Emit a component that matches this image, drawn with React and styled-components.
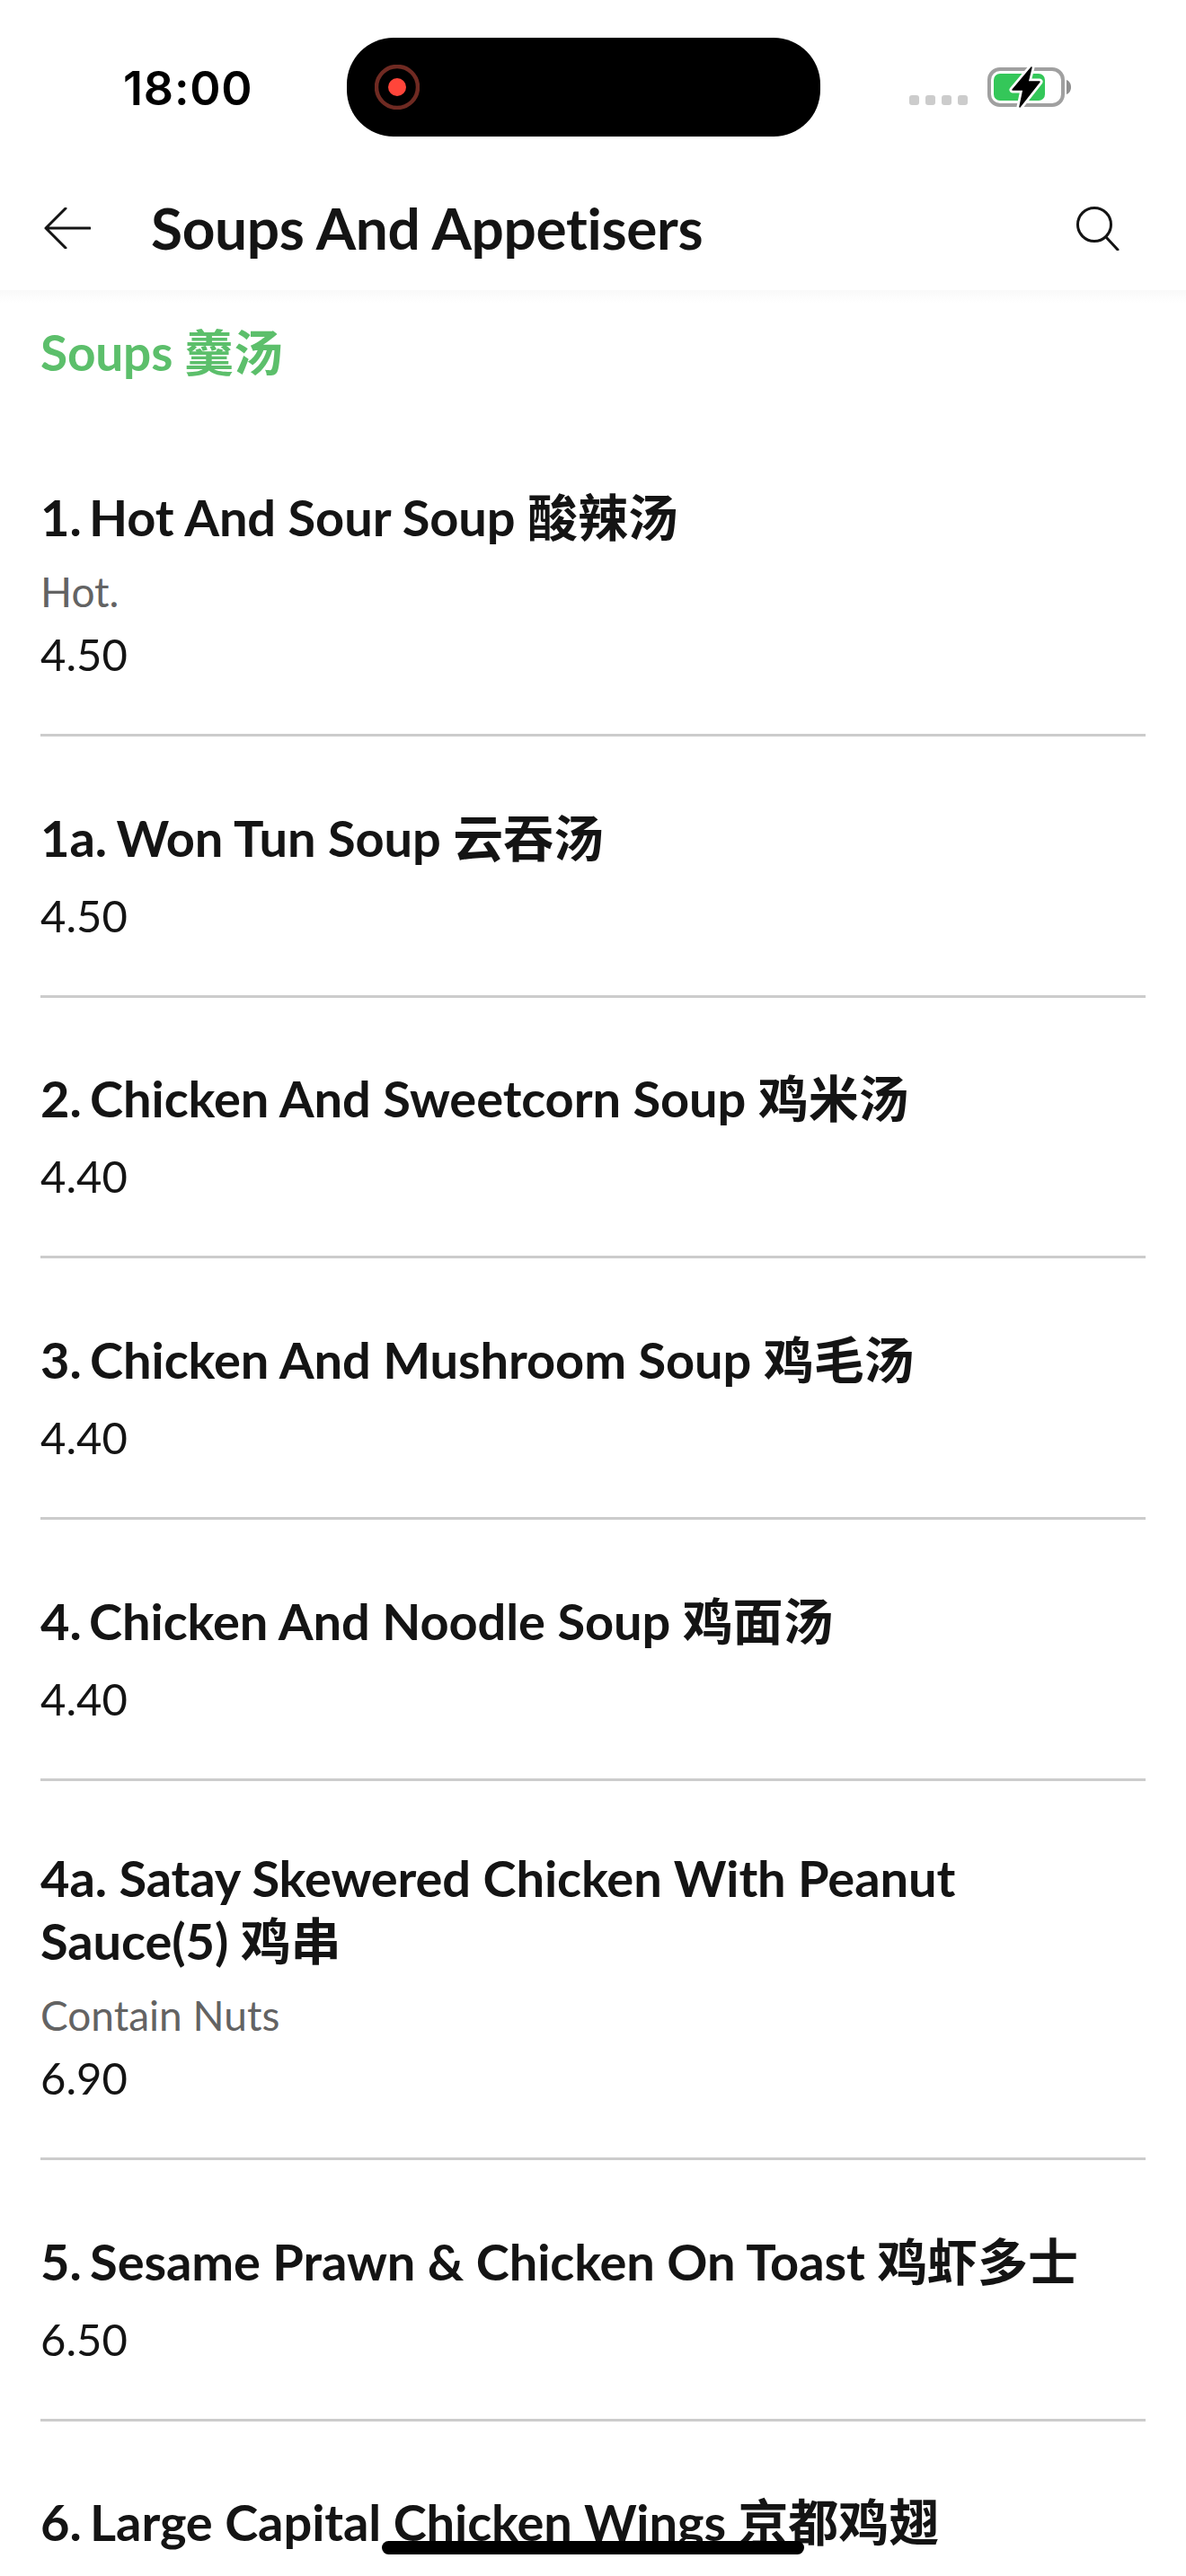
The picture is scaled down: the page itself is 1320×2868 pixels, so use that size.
import React from "react";
import styled, { createGlobalStyle } from "styled-components";

const Global = createGlobalStyle`
  html, body { margin: 0; padding: 0; background: #fff; }
  #root { width: 1320px; height: 2868px; overflow: hidden; }
`;

const FONT = `Lato, "Noto Sans CJK SC", sans-serif`;

const Screen = styled.div`
  position: relative;
  width: 1320px;
  height: 2868px;
  overflow: hidden;
  background: #fff;
  font-family: ${FONT};
  font-variant-ligatures: none;
`;

const StatusBar = styled.div`
  height: 195px;
  display: flex;
  align-items: flex-start;
  box-sizing: border-box;
  padding: 42px 128px 0 137px;
`;

const Time = styled.div`
  width: 249px;
  height: 110px;
  box-sizing: border-box;
  padding-top: 2px;
  display: flex;
  align-items: center;
  font-family: Inter, sans-serif;
  font-weight: 600;
  font-size: 52px;
  letter-spacing: 0.8px;
  color: #000;
`;

const Island = styled.div`
  width: 527px;
  height: 110px;
  border-radius: 52px;
  background: #000;
  display: flex;
  align-items: center;
  padding-left: 31px;
  padding-bottom: 1px;
  box-sizing: border-box;
`;

const Indicators = styled.div`
  flex: 1;
  display: flex;
  justify-content: flex-end;
  margin-top: 32px;
`;

const NavBar = styled.header`
  height: 128px;
  display: flex;
  align-items: center;
  box-sizing: border-box;
  padding: 0 74px 10px 49px;
`;

const Title = styled.h1`
  flex: 1;
  margin: 0 0 0 67px;
  font-size: 64px;
  font-weight: 700;
  line-height: 72px;
  letter-spacing: -0.35px;
  color: #141414;
`;

const NavShadow = styled.div`
  height: 14px;
  background: linear-gradient(#f9f9f9, #fff);
`;

const Section = styled.h2`
  margin: 0;
  padding: 19px 46px 0 45px;
  height: 126.33px;
  box-sizing: border-box;
  font-size: 55px;
  line-height: 72px;
  font-weight: 700;
  letter-spacing: -0.2px;
  color: #5cbf6b;
`;

const Item = styled.article`
  margin: 0 45px;
  padding: ${(p) => (p.$latinFirstLine ? "73.33px" : "77.67px")} 0 68px;
  border-bottom: 3px solid #cccccc;
  display: flex;
  flex-direction: column;
  gap: 30px;
`;

const Name = styled.div`
  font-size: 56px;
  font-weight: 700;
  line-height: 70px;
  letter-spacing: -0.1px;
  color: #141414;
`;

const Number = styled.span`
  word-spacing: ${(p) => p.$tuck}px;
`;

const Desc = styled.div`
  font-size: 46px;
  line-height: 36px;
  font-weight: 400;
  color: #636363;
`;

const Price = styled.div`
  font-size: 49px;
  line-height: 42px;
  font-weight: 400;
  color: #141414;
`;

const HomeBar = styled.div`
  position: absolute;
  left: 425px;
  top: 2829px;
  width: 470px;
  height: 15px;
  border-radius: 8px;
  background: #000;
`;

const items = [
  { num: "1.", name: "Hot And Sour Soup 酸辣汤", desc: "Hot.", price: "4.50", tuck: -5 },
  { num: "1a.", name: "Won Tun Soup 云吞汤", price: "4.50", tuck: -3 },
  { num: "2.", name: "Chicken And Sweetcorn Soup 鸡米汤", price: "4.40", tuck: -4 },
  { num: "3.", name: "Chicken And Mushroom Soup 鸡毛汤", price: "4.40", tuck: -4 },
  { num: "4.", name: "Chicken And Noodle Soup 鸡面汤", price: "4.40", tuck: -5 },
  { num: "4a.", name: "Satay Skewered Chicken With Peanut Sauce(5) 鸡串", desc: "Contain Nuts", price: "6.90", latinFirstLine: true },
  { num: "5.", name: "Sesame Prawn & Chicken On Toast 鸡虾多士", price: "6.50", tuck: -4 },
  { num: "6.", name: "Large Capital Chicken Wings 京都鸡翅", tuck: -4 },
];

const RecordIcon = () => (
  <svg width="50" height="50" viewBox="0 0 50 50">
    <circle cx="25" cy="25" r="23" fill="none" stroke="#6f2a22" strokeWidth="4.5" />
    <circle cx="25" cy="25" r="10" fill="#ff453a" />
  </svg>
);

const BOLT = "M136 1 L115 26 L127 26 L123 45 L145 17 L132 17 Z";

const StatusIcons = () => (
  <svg width="180" height="48" viewBox="0 0 180 48">
    <g fill="#cccccc">
      <rect x="0" y="32" width="11" height="11" rx="3" />
      <rect x="18" y="32" width="11" height="11" rx="3" />
      <rect x="36" y="32" width="11" height="11" rx="3" />
      <rect x="54" y="32" width="11" height="11" rx="3" />
    </g>
    <rect x="89" y="3" width="82" height="40" rx="12" fill="none" stroke="#a0a0a0" strokeWidth="4" />
    <path d="M175 15c3 1 5 4 5 8s-2 7-5 8z" fill="#8e8e8e" />
    <rect x="94" y="8" width="57" height="30" rx="7" fill="#34c759" />
    <path d={BOLT} fill="#fff" stroke="#fff" strokeWidth="7" strokeLinejoin="round" />
    <path d={BOLT} fill="#000" stroke="#000" strokeWidth="1.5" strokeLinejoin="round" />
  </svg>
);

const BackIcon = () => (
  <svg width="52" height="46" viewBox="0 0 52 46">
    <path d="M24 1 L2 23 L24 45 M2 23 H51" fill="none" stroke="#141414" strokeWidth="3" strokeLinecap="round" strokeLinejoin="round" />
  </svg>
);

const SearchIcon = () => (
  <svg width="48" height="50" viewBox="0 0 48 50">
    <circle cx="20" cy="21" r="18.5" fill="none" stroke="#141414" strokeWidth="3" />
    <path d="M33 35 L46 49" fill="none" stroke="#141414" strokeWidth="3" strokeLinecap="round" />
  </svg>
);

export default function App() {
  return (
    <Screen>
      <Global />
      <StatusBar>
        <Time>18:00</Time>
        <Island>
          <RecordIcon />
        </Island>
        <Indicators>
          <StatusIcons />
        </Indicators>
      </StatusBar>
      <NavBar>
        <BackIcon />
        <Title>Soups And Appetisers</Title>
        <SearchIcon />
      </NavBar>
      <NavShadow />
      <Section>Soups 羹汤</Section>
      {items.map((it) => (
        <Item key={it.num} $latinFirstLine={it.latinFirstLine}>
          <Name>
            {it.tuck ? (
              <>
                <Number $tuck={it.tuck}>{it.num + " "}</Number>
                {it.name}
              </>
            ) : (
              `${it.num} ${it.name}`
            )}
          </Name>
          {it.desc && <Desc>{it.desc}</Desc>}
          {it.price && <Price>{it.price}</Price>}
        </Item>
      ))}
      <HomeBar />
    </Screen>
  );
}
